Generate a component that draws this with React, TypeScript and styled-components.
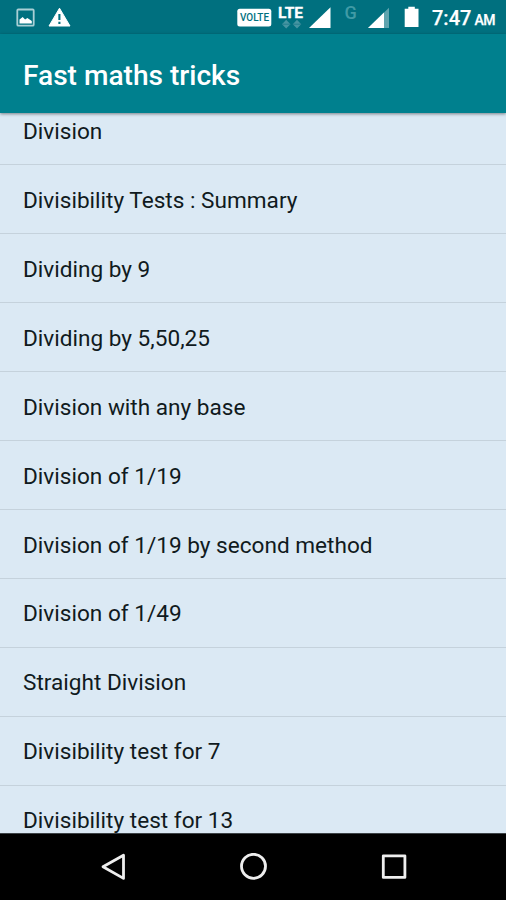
import React from "react";
import styled, { createGlobalStyle } from "styled-components";

const GlobalStyle = createGlobalStyle`
  *, *::before, *::after { box-sizing: border-box; }
  html, body { margin: 0; padding: 0; background: #000; }
  body { font-family: Roboto, "Liberation Sans", sans-serif; overflow: hidden; }
`;

const Screen = styled.div`
  display: flex;
  flex-direction: column;
  width: 506px;
  height: 900px;
  overflow: hidden;
  background: #dbe9f4;
`;

const StatusBar = styled.header`
  display: flex;
  align-items: flex-start;
  justify-content: space-between;
  flex: none;
  height: 34px;
  background: #00707f;
  color: #fff;
`;

const Icon = styled.svg`
  display: block;
  flex: none;
`;

const Clock = styled.div`
  display: flex;
  align-items: baseline;
  width: 74px;
  padding-top: 6px;
  font-size: 20px;
  line-height: 24px;
  font-weight: 500;
  -webkit-text-stroke: 0.25px #fff;
  white-space: nowrap;
`;

const Meridiem = styled.span`
  margin-left: 3px;
  font-size: 14px;
  letter-spacing: -0.3px;
`;

const StatusGroup = styled.div`
  display: flex;
`;

const AppBar = styled.div`
  display: flex;
  align-items: center;
  flex: none;
  height: 79px;
  padding: 4px 23px 0;
  background: #00808e;
  box-shadow: 0 1px 3px rgba(0, 0, 0, 0.45);
  z-index: 1;
`;

const Title = styled.h1`
  margin: 0;
  color: #fff;
  font-size: 28.1px;
  line-height: 32px;
  font-weight: 500;
`;

const ListViewport = styled.main`
  flex: 1;
  min-height: 0;
  overflow: hidden;
`;

const TopicList = styled.ul`
  margin: -16.6px 0 0;
  padding: 0;
  list-style: none;
`;

const Topic = styled.li`
  display: flex;
  align-items: center;
  height: 68.94px;
  padding: 3px 23px 0;
  border-bottom: 1px solid #c5d2dc;
  color: #101a20;
  font-size: 22.6px;
  line-height: 26px;
  white-space: nowrap;
`;

const NavBar = styled.nav`
  display: flex;
  align-items: center;
  justify-content: center;
  gap: 112px;
  flex: none;
  height: 67px;
  padding: 0 0 0 1px;
  background: #000;
  border-top: 1px solid #3c4246;
`;

const NavButton = styled.button`
  display: block;
  width: 28px;
  height: 28px;
  padding: 0;
  border: 0;
  background: transparent;
`;

const topics = [
  "Division",
  "Divisibility Tests : Summary",
  "Dividing by 9",
  "Dividing by 5,50,25",
  "Division with any base",
  "Division of 1/19",
  "Division of 1/19 by second method",
  "Division of 1/49",
  "Straight Division",
  "Divisibility test for 7",
  "Divisibility test for 13",
];

const NotificationIcons = () => (
  <Icon width="80" height="34" viewBox="0 0 80 34">
    <rect x="17.3" y="9.5" width="16.4" height="16.2" rx="1" fill="none" stroke="#a9cfd5" strokeWidth="1.8" />
    <path d="M19.5 23.5v-4l3.2-2.6 2.4 2.6 2.3-1.6 4.4 3.2v2.4z" fill="#fff" />
    <path d="M59.5 8.2 70 26H49z" fill="#fff" stroke="#fff" strokeWidth="1" strokeLinejoin="round" />
    <path d="M59.4 14v6M59.4 21.8v2.3" stroke="#00707f" strokeWidth="2.1" />
  </Icon>
);

const NetworkIcons = () => (
  <Icon width="196" height="34" viewBox="236 0 196 34" fontFamily="Roboto, sans-serif">
    <rect x="237.3" y="8.8" width="34" height="17.6" rx="2.5" fill="#fff" />
    <text x="240" y="21.2" fontSize="10" fontWeight="500" fill="#00707f" textLength="29" lengthAdjust="spacingAndGlyphs">VOLTE</text>
    <text x="278" y="18.3" fontSize="15" fontWeight="700" fill="#fff" stroke="#fff" strokeWidth="0.3" textLength="25" lengthAdjust="spacingAndGlyphs">LTE</text>
    <path
      d="m286.2 19.8 4.2 4.4-4.2 4.2-4.2-4.2zM297 19.8l4.2 4.4-4.2 4.2-4.2-4.2z"
      fill="#4695a2"
    />
    <path d="M282 24.2h8.4M292.8 24.2h8.4" stroke="#237f8e" strokeWidth="1" />
    <path d="M330.5 7.3V28H309z" fill="#fff" />
    <text x="344.4" y="19.3" fontSize="18" fontWeight="500" fill="#409ba6">G</text>
    <path d="M389 7.8V28h-21z" fill="#5fa4ae" />
    <path d="M384 12.6V28h-16z" fill="#fff" />
    <path d="M408.3 6.8h6.5v2h3.7V27H404.7V8.8h3.6z" fill="#fff" />
  </Icon>
);

const NavIcon = ({ children }: { children: React.ReactNode }) => (
  <Icon width="28" height="28" viewBox="0 0 28 28" fill="none" stroke="#eee" strokeWidth="2.8" strokeLinejoin="round">
    {children}
  </Icon>
);

export default function App() {
  return (
    <Screen>
      <GlobalStyle />
      <StatusBar>
        <NotificationIcons />
        <StatusGroup>
          <NetworkIcons />
          <Clock>
            7:47<Meridiem>AM</Meridiem>
          </Clock>
        </StatusGroup>
      </StatusBar>
      <AppBar>
        <Title>Fast maths tricks</Title>
      </AppBar>
      <ListViewport>
        <TopicList>
          {topics.map((topic) => (
            <Topic key={topic}>{topic}</Topic>
          ))}
        </TopicList>
      </ListViewport>
      <NavBar>
        <NavButton aria-label="Back">
          <NavIcon>
            <path d="M23.5 2.2v23.2L3 13.8z" />
          </NavIcon>
        </NavButton>
        <NavButton aria-label="Home">
          <NavIcon>
            <circle cx="13.5" cy="13.3" r="12" />
          </NavIcon>
        </NavButton>
        <NavButton aria-label="Recent apps">
          <NavIcon>
            <rect x="3.3" y="2.8" width="21.6" height="21.6" />
          </NavIcon>
        </NavButton>
      </NavBar>
    </Screen>
  );
}
